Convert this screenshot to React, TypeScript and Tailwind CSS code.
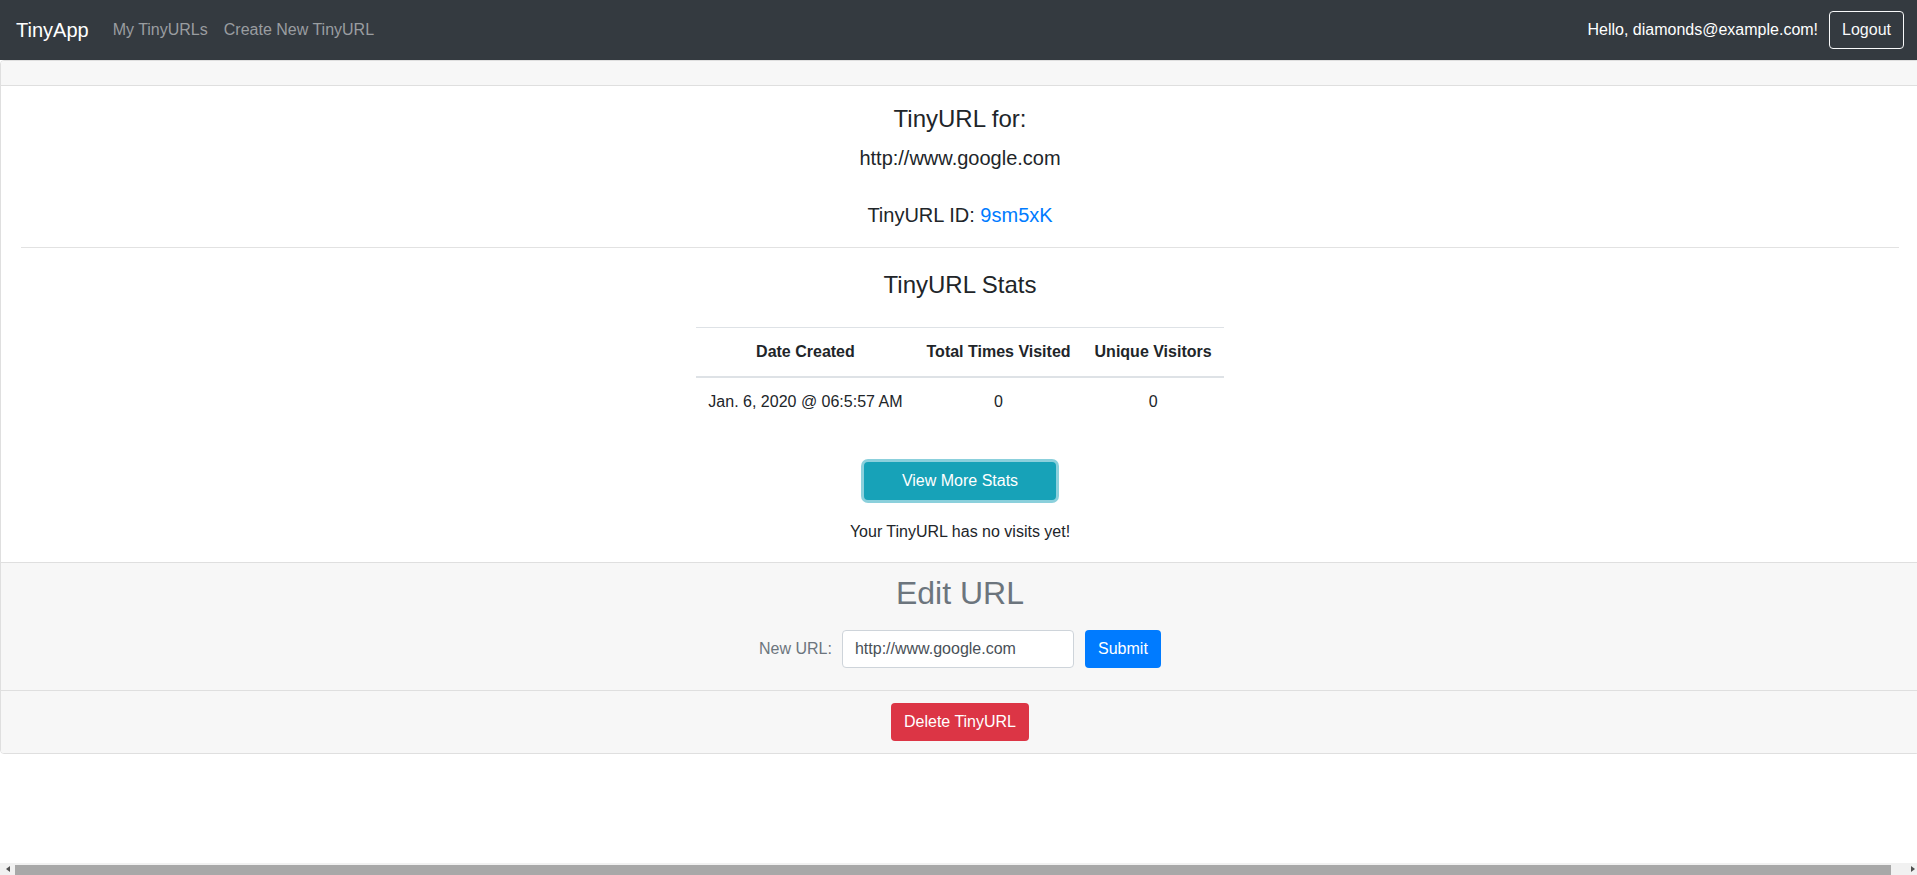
import React from "react";

function FakeScrollbar() {
    // horizontal scrollbar seen at the bottom of the page
    return (
        <div className="fixed bottom-0 left-0 w-full h-[12px] bg-[#f1f1f1] flex items-end">
            <div className="w-[15px] h-full flex items-center justify-center">
                <div className="w-0 h-0 border-y-[3px] border-y-transparent border-r-[4px] border-r-[#505050]"></div>
            </div>
            <div className="w-[1876px] h-[10px] bg-[#a8a8a8]"></div>
            <div className="flex-1 h-full flex items-center justify-end pr-[2px]">
                <div className="w-0 h-0 border-y-[3px] border-y-transparent border-l-[4px] border-l-[#505050]"></div>
            </div>
        </div>
    );
}

export default function App() {
    return (
        <div className="w-[1928px] min-h-screen bg-white text-[#212529] text-[16px] leading-[24px] font-['Liberation_Sans',Arial,sans-serif]">
            <nav className="w-[1920px] h-[60px] bg-[#343a40] flex items-center justify-between px-[16px]">
                <div className="flex items-center">
                    <a href="#" className="text-white text-[20px] leading-[30px] mr-[16px]">TinyApp</a>
                    <a href="#" className="text-[#9a9da0] px-[8px]">My TinyURLs</a>
                    <a href="#" className="text-[#9a9da0] px-[8px]">Create New TinyURL</a>
                </div>
                <div className="flex items-center">
                    <span className="text-white mr-[11px]">Hello, diamonds@example.com!</span>
                    <button className="h-[38px] px-[12px] border border-[#f8f9fa] rounded-[4px] text-[#f8f9fa]">
                        Logout
                    </button>
                </div>
            </nav>

            <div className="w-[1920px] border border-[#dfdfdf] rounded-[4px] overflow-hidden">
                <div className="h-[25px] bg-[#f7f7f7] border-b border-[#dfdfdf]"></div>

                <div className="px-[20px] pt-[19px] pb-[18px] flex flex-col items-center text-center">
                    <h4 className="text-[24px] leading-[28.8px]">TinyURL for:</h4>
                    <h5 className="mt-[12px] text-[20px] leading-[24px]">http://www.google.com</h5>
                    <h5 className="mt-[33px] text-[20px] leading-[24px]">
                        TinyURL ID: <a href="#" className="text-[#007bff]">9sm5xK</a>
                    </h5>
                    <hr className="w-full mt-[20px] border-t border-[#e2e2e2]"/>
                    <h4 className="mt-[23px] text-[24px] leading-[28.8px]">TinyURL Stats</h4>

                    <table className="mt-[27px] border-collapse">
                        <thead>
                        <tr>
                            <th className="px-[12px] py-[12px] border-t border-b-2 border-[#dee2e6] font-bold">Date Created</th>
                            <th className="px-[12px] py-[12px] border-t border-b-2 border-[#dee2e6] font-bold">Total Times Visited</th>
                            <th className="px-[12px] py-[12px] border-t border-b-2 border-[#dee2e6] font-bold">Unique Visitors</th>
                        </tr>
                        </thead>
                        <tbody>
                        <tr>
                            <td className="px-[12px] py-[12px]">Jan. 6, 2020 @ 06:5:57 AM</td>
                            <td className="px-[12px] py-[12px]">0</td>
                            <td className="px-[12px] py-[12px]">0</td>
                        </tr>
                        </tbody>
                    </table>

                    <button className="mt-[36px] w-[192px] h-[38px] rounded-[4px] bg-[#17a2b8] text-white shadow-[0_0_0_3px_#8bd0dc]">
                        View More Stats
                    </button>
                    <p className="mt-[20px]">Your TinyURL has no visits yet!</p>
                </div>

                <div className="border-t border-[#dfdfdf] bg-[#f7f7f7] pt-[11px] pb-[22px] flex flex-col items-center">
                    <h2 className="text-[32px] leading-[38.4px] text-[#6c757d]">Edit URL</h2>
                    <form className="mt-[18px] flex items-center" onSubmit={(e) => e.preventDefault()}>
                        <label className="text-[#6c757d] mr-[10px]">New URL:</label>
                        <input
                            type="text"
                            defaultValue="http://www.google.com"
                            className="w-[232px] h-[38px] px-[12px] bg-white border border-[#ced4da] rounded-[4px] text-[#495057] outline-none"
                        />
                        <button type="submit" className="ml-[11px] w-[76px] h-[38px] rounded-[4px] bg-[#007bff] text-white">
                            Submit
                        </button>
                    </form>
                </div>

                <div className="border-t border-[#dfdfdf] bg-[#f7f7f7] py-[12px] flex justify-center">
                    <button className="w-[138px] h-[38px] rounded-[4px] bg-[#dc3545] text-white">
                        Delete TinyURL
                    </button>
                </div>
            </div>

            <FakeScrollbar/>
        </div>
    );
}
